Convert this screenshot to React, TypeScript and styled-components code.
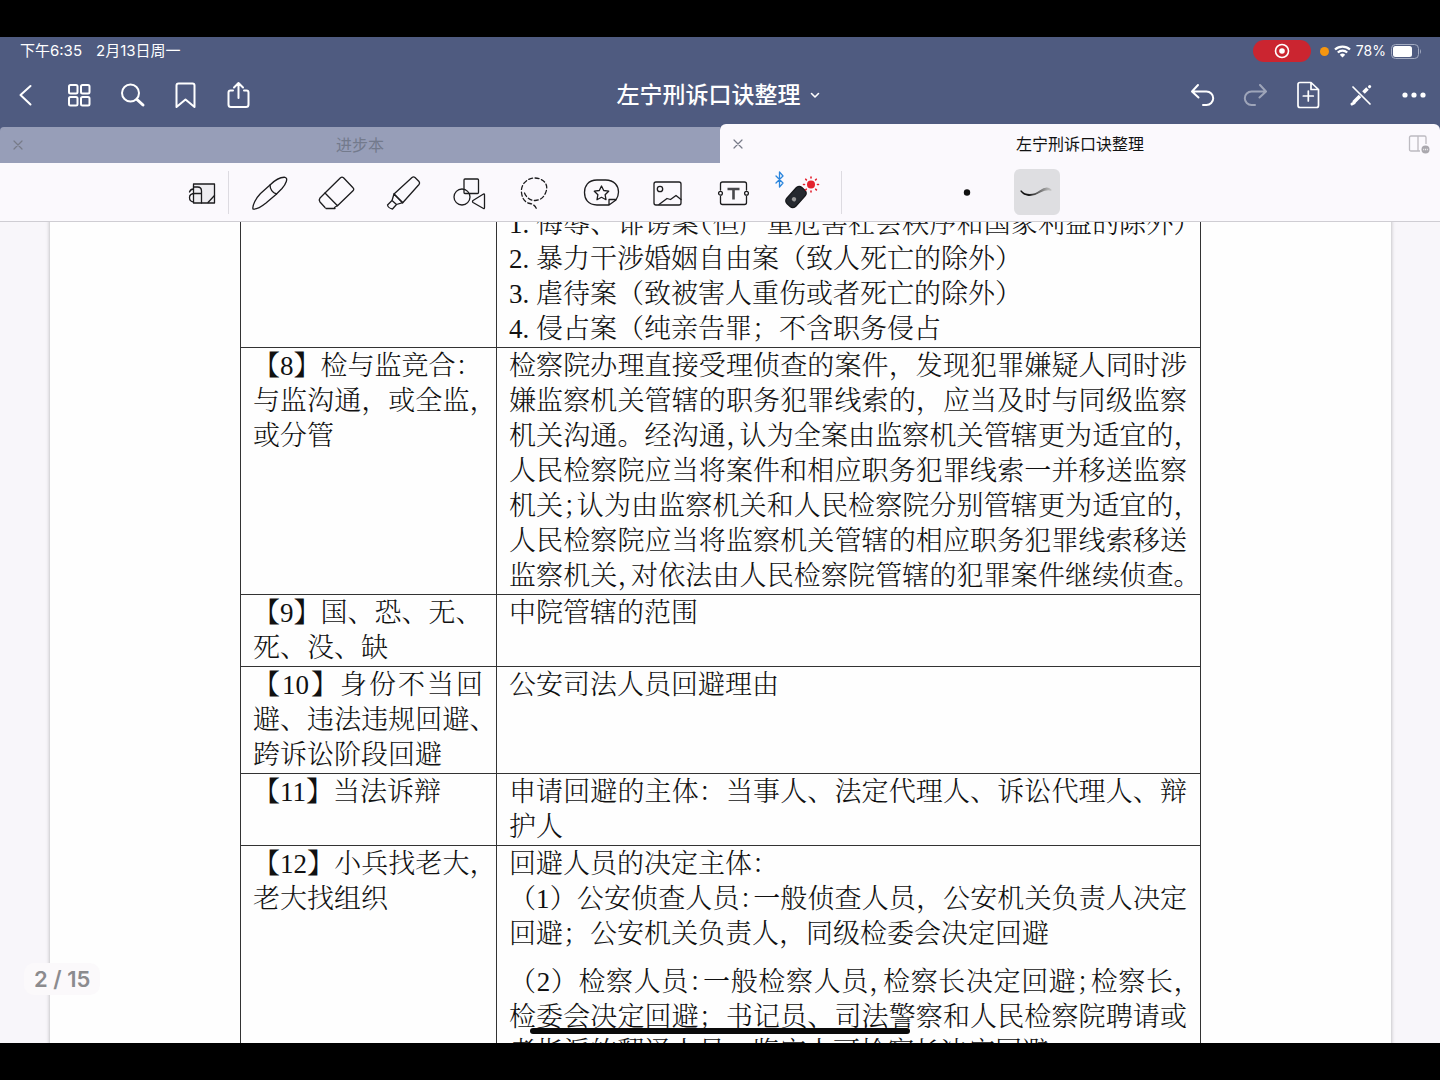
import React from "react";
import styled, { createGlobalStyle, css } from "styled-components";

const ui = `Inter, "Noto Sans CJK SC", sans-serif`;
const serif = `"Liberation Serif", "Noto Serif CJK SC", "Noto Sans CJK SC", serif`;

const GlobalStyle = createGlobalStyle`
  * { box-sizing: border-box; }
  body { margin: 0; background: #000; font-family: ${ui}; }
  button { border: 0; padding: 0; margin: 0; background: none; color: inherit; font: inherit; cursor: pointer; }
  svg { display: block; overflow: visible; }
`;

const Screen = styled.div`
  height: 100vh;
  padding: 37px 0;
  display: flex;
  flex-direction: column;
  background: #000;
`;

const Header = styled.header`
  background: #4f5b80;
  color: #fff;
`;

const StatusBar = styled.div`
  height: 28px;
  padding: 0 19px 0 20px;
  display: flex;
  align-items: center;
  justify-content: space-between;
  font-size: 15px;
  line-height: 20px;
`;

const StatusGroup = styled.div<{ $gap: number }>`
  display: flex;
  align-items: center;
  gap: ${(p) => p.$gap}px;
`;

const Battery = styled.span`
  font-size: 14px;
`;

const Recording = styled.span`
  width: 58px;
  height: 22px;
  margin-right: 4px;
  border-radius: 11px;
  background: #cb2530;
  display: grid;
  place-items: center;
`;

const MicDot = styled.span`
  width: 9px;
  height: 9px;
  border-radius: 50%;
  background: #f6960f;
`;

const NavBar = styled.nav`
  height: 60px;
  padding: 0 10px;
  display: grid;
  grid-template-columns: 1fr auto 1fr;
  align-items: center;
`;

const NavGroup = styled.div<{ $end?: boolean }>`
  display: flex;
  gap: 21px;
  justify-content: ${(p) => (p.$end ? "flex-end" : "flex-start")};
`;

const IconButton = styled.button<{ $dim?: boolean }>`
  width: 32px;
  height: 32px;
  display: grid;
  place-items: center;
  opacity: ${(p) => (p.$dim ? 0.45 : 1)};
`;

const Title = styled.button`
  display: flex;
  align-items: center;
  gap: 8px;
  padding-right: 3px;
  font-size: 23px;
  line-height: 32px;
  font-weight: 500;
`;

const Tabs = styled.div`
  display: flex;
  align-items: flex-end;
  height: 38px;
`;

const Tab = styled.div<{ $active?: boolean }>`
  flex: 1;
  height: ${(p) => (p.$active ? 39 : 36)}px;
  padding: 0 8px;
  display: grid;
  grid-template-columns: 24px 1fr 24px;
  align-items: center;
  border-radius: ${(p) => (p.$active ? "6px 6px 0 0" : "4px 0 0 0")};
  background: ${(p) => (p.$active ? "#fbf9fd" : "#979eb8")};
  color: ${(p) => (p.$active ? "#111" : "#737a8c")};
`;

const TabName = styled.button`
  font-size: 16px;
  line-height: 24px;
  text-align: center;
`;

const TabIcon = styled.button`
  width: 20px;
  height: 24px;
  display: grid;
  place-items: center;
  color: #777b88;
`;

const Toolbar = styled.div`
  height: 59px;
  padding-left: 182px;
  display: flex;
  align-items: center;
  background: #fbf9fd;
  border-bottom: 1px solid #cfcdd3;
`;

const Divider = styled.span`
  width: 1px;
  height: 43px;
  background: #dddbe1;
`;

const Tools = styled.div`
  padding: 0 19px;
  display: flex;
  gap: 20px;
`;

const Tool = styled.button<{ $selected?: boolean }>`
  width: 46px;
  height: 46px;
  display: grid;
  place-items: center;
  border-radius: 6px;
  color: #1c1c1e;
  background: ${(p) => (p.$selected ? "#dedee1" : "transparent")};
`;

const Strokes = styled.div`
  margin-left: 102px;
  display: flex;
  gap: 24px;
`;

const Viewer = styled.main`
  position: relative;
  flex: 1;
  min-height: 0;
  overflow: hidden;
  padding: 0 49px 0 50px;
  background: #f8f6fa;
`;

const Page = styled.article`
  min-height: 100%;
  padding: 0 190px;
  background: #fefefe;
  box-shadow: 0 0 4px rgba(0, 0, 0, 0.3);
`;

const Sheet = styled.table`
  width: 100%;
  margin-top: -17px;
  table-layout: fixed;
  border-collapse: collapse;
  font-family: ${serif};
  font-size: 27px;
  font-weight: 300;
  line-height: 35px;
  color: #111;
`;

const Cell = styled.td<{ $key?: boolean }>`
  width: ${(p) => (p.$key ? "256px" : "auto")};
  padding: 1px 13px 0 12px;
  border: 1px solid #333;
  vertical-align: top;
`;

const Line = styled.div<{ $full?: boolean; $spaced?: boolean }>`
  white-space: nowrap;
  ${(p) => p.$full && css`text-align: justify; text-align-last: justify;`}
  ${(p) => p.$spaced && css`margin-top: 13px;`}
`;

const Half = styled.span`
  font-feature-settings: "halt";
`;

const PageNumber = styled.output`
  position: absolute;
  left: 24px;
  bottom: 48px;
  padding: 0 10px;
  border-radius: 10px;
  background: #fbf9fb;
  color: #8b8b8e;
  font-size: 22px;
  line-height: 32px;
  font-weight: 600;
`;

const HomeIndicator = styled.span`
  position: absolute;
  left: 50%;
  bottom: 9px;
  width: 380px;
  height: 6px;
  transform: translateX(-50%);
  border-radius: 3px;
  background: #0a0a0a;
`;

type LineData = { text: string; full?: boolean; spaced?: boolean };
type RowData = { left: LineData[]; right: LineData[] };

const f = (text: string, spaced = false): LineData => ({ text, full: true, spaced });
const n = (text: string): LineData => ({ text });

/* A "~" before a punctuation mark sets it half an em wide. */
const rows: RowData[] = [
  {
    left: [],
    right: [
      f("1. 侮辱、诽谤案~（但严重危害社会秩序和国家利益的除外~）"),
      n("2. 暴力干涉婚姻自由案（致人死亡的除外）"),
      n("3. 虐待案（致被害人重伤或者死亡的除外）"),
      n("4. 侵占案（纯亲告罪；不含职务侵占"),
    ],
  },
  {
    left: [n("【8】检与监竞合："), f("与监沟通，或全监~，"), n("或分管")],
    right: [
      f("检察院办理直接受理侦查的案件，发现犯罪嫌疑人同时涉"),
      f("嫌监察机关管辖的职务犯罪线索的，应当及时与同级监察"),
      f("机关沟通。经沟通~，认为全案由监察机关管辖更为适宜的~，"),
      f("人民检察院应当将案件和相应职务犯罪线索一并移送监察"),
      f("机关~；认为由监察机关和人民检察院分别管辖更为适宜的~，"),
      f("人民检察院应当将监察机关管辖的相应职务犯罪线索移送"),
      f("监察机关~，对依法由人民检察院管辖的犯罪案件继续侦查~。"),
    ],
  },
  { left: [n("【9】国、恐、无、"), n("死、没、缺")], right: [n("中院管辖的范围")] },
  {
    left: [f("【10】身份不当回"), f("避、违法违规回避~、"), n("跨诉讼阶段回避")],
    right: [n("公安司法人员回避理由")],
  },
  {
    left: [n("【11】当法诉辩")],
    right: [f("申请回避的主体：当事人、法定代理人、诉讼代理人、辩"), n("护人")],
  },
  {
    left: [f("【12】小兵找老大~，"), n("老大找组织")],
    right: [
      n("回避人员的决定主体："),
      f("（1）公安侦查人员~：一般侦查人员，公安机关负责人决定"),
      n("回避；公安机关负责人，同级检委会决定回避"),
      f("（2）检察人员~：一般检察人员~，检察长决定回避~；检察长~，", true),
      f("检委会决定回避；书记员、司法警察和人民检察院聘请或"),
      n("者指派的翻译人员、鉴定人可检察长决定回避"),
    ],
  },
];

const renderText = (text: string) =>
  text.split(/(~.)/).map((part, i) =>
    part.startsWith("~") ? <Half key={i}>{part.slice(1)}</Half> : part,
  );

const Lines = ({ items }: { items: LineData[] }) => (
  <>
    {items.map((l) => (
      <Line key={l.text} $full={l.full} $spaced={l.spaced}>
        {renderText(l.text)}
      </Line>
    ))}
  </>
);

type IconProps = { size?: number; w?: number; children: React.ReactNode };
const Icon = ({ size = 32, w = 2, children }: IconProps) => (
  <svg width={size} height={size} viewBox={`0 0 ${size} ${size}`} fill="none" stroke="currentColor"
    strokeWidth={w} strokeLinecap="round" strokeLinejoin="round" aria-hidden="true">
    {children}
  </svg>
);
const ToolIcon = ({ children }: { children: React.ReactNode }) => (
  <Icon size={46} w={1.3}>{children}</Icon>
);

const Cross = () => <Icon size={12} w={1.2}><path d="M2 2l8 8M10 2l-8 8" /></Icon>;

const leftNav = [
  { label: "返回", art: <path d="M20.500 7L10.500 16l10 9.500" /> },
  {
    label: "缩略图",
    art: <><rect x="6" y="6" width="8.500" height="8.500" rx="1.500" /><rect x="18" y="6" width="8.500" height="8.500" rx="1.500" /><rect x="6" y="18" width="8.500" height="8.500" rx="1.500" /><rect x="18" y="18" width="8.500" height="8.500" rx="1.500" /></>,
  },
  { label: "搜索", art: <><circle cx="14.500" cy="14" r="8.500" /><path d="M21 20.500l6 5.500" strokeWidth="3" /></> },
  { label: "书签", art: <path d="M7.500 28V6.500Q7.500 4.500 9.500 4.500h14Q25.500 4.500 25.500 6.500V28l-9-7.500z" /> },
  { label: "分享", art: <path d="M11 11.500H8.500Q6.500 11.500 6.500 13.500v12Q6.500 28 9 28h15Q26.500 28 26.500 25.500v-12Q26.500 11.500 24.500 11.500H22M16.500 19V4M12 8.500L16.500 4 21 8.500" /> },
];

const rightNav = [
  { label: "撤销", art: <path d="M12 6L6 12.500l6.500 6M6.500 12.500H20.500a6.700 6.700 0 0 1 0 13.400H17" /> },
  { label: "重做", dim: true, art: <path d="M21 6L27 12.500l-6.500 6M26.500 12.500H12.500a6.700 6.700 0 0 0 0 13.400H16" /> },
  { label: "添加页面", art: <><path d="M19 3.500H8Q6 3.500 6 5.500v21Q6 28.500 8 28.500h16.500Q26.500 28.500 26.500 26.500V10.500zV10.500H26.500M16.300 12v10M11.300 17h10" strokeWidth="1.700" /></> },
  { label: "只读模式", art: <><path d="M8 8l17 17" strokeWidth="1.700" /><path d="M8.500 23.500l6.500-6.500M18.500 13.500l4-4" strokeWidth="3.600" strokeLinecap="butt" /><path d="M7 25l2-1M24.500 7.700l.2-.2" strokeWidth="3" /></> },
  { label: "更多", art: <g fill="currentColor" stroke="none"><circle cx="7" cy="16" r="2.600" /><circle cx="16" cy="16" r="2.600" /><circle cx="25" cy="16" r="2.600" /></g> },
];

const tools = [
  { label: "钢笔", art: <><path d="M5 40C4 37 8 29 12.500 24.500L22 16C27 11 33 8 37 8.300 40.500 9 38 15 34 19.500L28 25.500 18 34C13 38 8 40.500 5 40z" /><path d="M22 16c0 4 2.500 8 6.500 9" /></> },
  { label: "橡皮擦", art: <><path d="M11 24L26.500 8.700q1.500-1.200 3 0l9.500 10q1.500 1.500 0 3L23.500 36.700z" /><path d="M11 24l-5 5q-1.500 2 0 4l5 5.500M20.500 38.500l3-2M12 39.500h9" /></> },
  { label: "荧光笔", art: <><path d="M14 25L32 8.500q1.500-1.200 3 0l4 4q1.200 1.500 0 3L22.700 33.700z" /><path d="M14 25l-2 6.500 4.500 4 6.200-1.800M14 25l8.700 8.700M12 31.500l-4.500 4.500q.5 3 5 4l4-4.500" /></> },
  { label: "形状", art: <><rect x="18" y="10" width="14.500" height="14.500" rx="1" /><circle cx="16" cy="28" r="8" /><path d="M27 31.500l10.500-6.500q1-.5 1 1v12.500q0 1.500-1 1l-10.500-6q-1-1 0-2z" /></> },
  { label: "套索", art: <path strokeDasharray="4 2.500" d="M12.500 24c4 10 17 10 21 0 4.500-10-4-15-11-15S8.500 15 9.500 23.500 15 34 18 34.500s5.500 2.500 6.500 5.500" /> },
  { label: "贴纸", art: <><path d="M31 36H19C10 36 6.500 30 6.500 23.500S10 11 19 11h8.500c9 0 13 6 13 12 0 3-1 5.500-2.500 8L31 36v-5.500h7" /><path d="M23.500 17l2.200 4.500 5 .7-3.600 3.500.9 5-4.500-2.400-4.500 2.400.9-5-3.600-3.500 5-.7z" /></> },
  { label: "图片", art: <><rect x="10" y="13" width="27" height="23" rx="2" /><circle cx="16" cy="20" r="2.700" /><path d="M15 35.500l8-6 3.500 1 5.500-4 5 4" /></> },
  { label: "文本", art: <><path d="M10.500 21v-6q0-2 2-2h22q2 0 2 2v6M10.500 27.500v6q0 2 2 2h22q2 0 2-2v-6" /><circle cx="10.500" cy="24.300" r="1.900" /><circle cx="36.500" cy="24.300" r="1.900" /><path d="M17.500 20h12M23.500 20V30.500" stroke="#48484c" strokeWidth="2.600" strokeLinecap="butt" /></> },
  {
    label: "激光笔",
    art: (
      <>
        <path d="M0 7l7 7L3.500 18V3L7 7 0 14" stroke="#2b86dd" />
        <g transform="rotate(42 20 28)"><rect x="14" y="17" width="12" height="22" rx="4" fill="#25292f" stroke="#15171a" /><circle cx="20" cy="31" r="2.200" fill="#999" stroke="none" /></g>
        <circle cx="35" cy="15.500" r="4" fill="#e3232f" stroke="none" />
        <path d="M35 8v1M35 22v1M27.500 15.500h1M41.500 15.500h1M29.700 10.200l.7.700M39.700 20.200l.7.700M40.300 10.200l-.7.700M30.300 20.200l-.7.700" stroke="#e3232f" strokeWidth="1.600" />
      </>
    ),
  },
];

export default function App() {
  return (
    <>
      <GlobalStyle />
      <Screen>
        <Header>
          <StatusBar>
            <StatusGroup $gap={14}>
              <span>下午6:35</span>
              <span>2月13日周一</span>
            </StatusGroup>
            <StatusGroup $gap={5}>
              <Recording>
                <Icon size={16}><circle cx="8" cy="8" r="6.500" strokeWidth="1.600" /><circle cx="8" cy="8" r="2.800" fill="currentColor" stroke="none" /></Icon>
              </Recording>
              <MicDot />
              <svg width="17" height="13" viewBox="0 0 17 13" fill="none" stroke="#fff" strokeWidth="2.300" aria-hidden="true">
                <path d="M1 4.500a11 11 0 0 1 15 0M3.800 7.500a7 7 0 0 1 9.400 0" />
                <path d="M5.800 9.700a4 4 0 0 1 5.400 0L8.500 12.500z" fill="#fff" stroke="none" />
              </svg>
              <Battery>78%</Battery>
              <svg width="30" height="15" viewBox="0 0 30 15" aria-hidden="true">
                <rect x=".5" y=".5" width="27" height="14" rx="4" fill="none" stroke="#a3abc1" />
                <rect x="2" y="2" width="19" height="11" rx="2.500" fill="#fff" />
                <path d="M29 5q2 2.500 0 5z" fill="#a3abc1" />
              </svg>
            </StatusGroup>
          </StatusBar>
          <NavBar>
            <NavGroup>
              {leftNav.map((b) => <IconButton key={b.label} aria-label={b.label}><Icon>{b.art}</Icon></IconButton>)}
            </NavGroup>
            <Title>
              左宁刑诉口诀整理
              <Icon size={12} w={1.6}><path d="M2.500 4.500L6 8l3.500-3.500" /></Icon>
            </Title>
            <NavGroup $end>
              {rightNav.map((b) => <IconButton key={b.label} aria-label={b.label} $dim={b.dim}><Icon>{b.art}</Icon></IconButton>)}
            </NavGroup>
          </NavBar>
          <Tabs>
            <Tab>
              <TabIcon aria-label="关闭进步本"><Cross /></TabIcon>
              <TabName>进步本</TabName>
            </Tab>
            <Tab $active>
              <TabIcon aria-label="关闭左宁刑诉口诀整理"><Cross /></TabIcon>
              <TabName>左宁刑诉口诀整理</TabName>
              <TabIcon aria-label="分屏">
                <svg width="20" height="20" viewBox="0 0 20 20" fill="none" stroke="#bdbbc1" strokeWidth="1.300" aria-hidden="true">
                  <path d="M12 17H3Q1.500 17 1.500 15.500v-12Q1.500 2 3 2h13.500Q18 2 18 3.500V10M10 2v15" />
                  <circle cx="17.500" cy="15.500" r="4" fill="#aaa8ae" stroke="none" />
                  <path d="M15.200 15.500h4.600" stroke="#eee" strokeDasharray="1 .8" />
                </svg>
              </TabIcon>
            </Tab>
          </Tabs>
          <Toolbar>
            <Tool aria-label="缩放窗口">
              <ToolIcon>
                <rect x="11.500" y="15" width="21" height="19" fill="#eeedf1" />
                <path d="M11.500 18h4q4 0 4 4v12M19.500 24.500h-6.500q-5.500 0-5.500 4t4 4.500M7.500 23q1-3 4-3M26 33.500l6.500-7" />
              </ToolIcon>
            </Tool>
            <Divider />
            <Tools>
              {tools.map((t) => <Tool key={t.label} aria-label={t.label}><ToolIcon>{t.art}</ToolIcon></Tool>)}
            </Tools>
            <Divider />
            <Strokes>
              <Tool aria-label="圆点"><ToolIcon><circle cx="23" cy="23.500" r="3.200" fill="#111" stroke="none" /></ToolIcon></Tool>
              <Tool $selected aria-label="笔迹">
                <ToolIcon>
                  <defs>
                    <linearGradient id="ink" x1="7" x2="38" y1="0" y2="0" gradientUnits="userSpaceOnUse">
                      <stop offset="0.200" stopColor="#111" /><stop offset="1" stopColor="#ccc" />
                    </linearGradient>
                  </defs>
                  <path d="M7 22c4 5 13 5 19 0 4-3 8-4 11-1-4-1-7 0-11 2-8 5-16 4-19-1z" fill="url(#ink)" stroke="url(#ink)" />
                </ToolIcon>
              </Tool>
            </Strokes>
          </Toolbar>
        </Header>
        <Viewer>
          <Page>
            <Sheet>
              <tbody>
                {rows.map((r, i) => (
                  <tr key={i}>
                    <Cell $key><Lines items={r.left} /></Cell>
                    <Cell><Lines items={r.right} /></Cell>
                  </tr>
                ))}
              </tbody>
            </Sheet>
          </Page>
          <PageNumber>2 / 15</PageNumber>
          <HomeIndicator />
        </Viewer>
      </Screen>
    </>
  );
}
